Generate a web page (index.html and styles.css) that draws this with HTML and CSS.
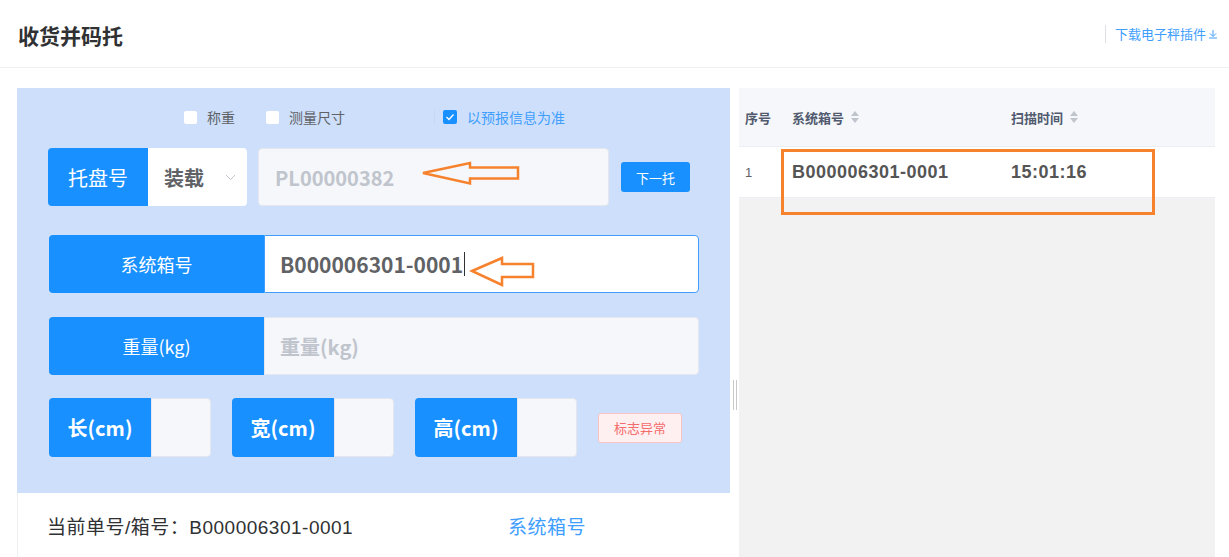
FILE: index.html
```html
<!DOCTYPE html>
<html lang="zh-CN">

<head>
    <meta charset="UTF-8">
    <meta name="viewport" content="width=device-width, initial-scale=1.0">
    <title>收货并码托</title>
    <link rel="stylesheet" href="styles.css">
</head>

<body>

    <header class="page-header">
        <h1>收货并码托</h1>
        <div class="header-tools">
            <span class="tool-sep"></span>
            <a class="download-link">下载电子秤插件
                <svg width="10" height="10" viewBox="0 0 10 10"><path d="M5 1v6M2 4.5l3 3 3-3M1 9h8" fill="none" stroke="#409eff" stroke-width="1"/></svg>
            </a>
        </div>
    </header>

    <div class="page-body">
        <div class="left-side">
            <div class="form-area">
                <div class="check-row">
                    <label class="check"><span class="box"></span>称重</label>
                    <label class="check"><span class="box"></span>测量尺寸</label>
                    <span class="check-sep"></span>
                    <label class="check checked"><span class="box">
                        <svg width="10" height="8" viewBox="0 0 10 8"><path d="M1.5 4l2.5 2.5 4.5-5" fill="none" stroke="#fff" stroke-width="1.3"/></svg>
                    </span>以预报信息为准</label>
                </div>

                <div class="form-row">
                    <div class="addon pallet">托盘号</div>
                    <div class="select-box">装载
                        <svg width="11" height="7" viewBox="0 0 11 7"><path d="M1 1l4.5 4.5L10 1" fill="none" stroke="#c0c4cc" stroke-width="1"/></svg>
                    </div>
                    <div class="input-box pallet-input placeholder">PL00000382</div>
                    <button class="btn-primary">下一托</button>
                </div>

                <div class="form-row wide">
                    <div class="addon wide-addon">系统箱号</div>
                    <div class="input-box focus box-no">B000006301-0001<span class="caret"></span></div>
                </div>

                <div class="form-row wide">
                    <div class="addon wide-addon">重量(kg)</div>
                    <div class="input-box placeholder">重量(kg)</div>
                </div>

                <div class="form-row size-row">
                    <div class="size-group">
                        <div class="addon size-addon">长(cm)</div>
                        <div class="input-box size-input"></div>
                    </div>
                    <div class="size-group">
                        <div class="addon size-addon">宽(cm)</div>
                        <div class="input-box size-input"></div>
                    </div>
                    <div class="size-group">
                        <div class="addon size-addon">高(cm)</div>
                        <div class="input-box size-input"></div>
                    </div>
                    <button class="btn-danger">标志异常</button>
                </div>

                <!-- annotation arrows -->
                <svg class="mark-arrow arrow-one" width="104" height="28" viewBox="0 0 104 28">
                    <path d="M3 13 L50 3 L50 7.5 L98 7.5 L98 18.5 L50 18.5 L50 23.5 Z" fill="none" stroke="#f7822d" stroke-width="2.5" stroke-linejoin="miter"/>
                </svg>
                <svg class="mark-arrow arrow-two" width="70" height="34" viewBox="0 0 70 34">
                    <path d="M3 15 L33 2 L33 8 L64 8 L64 21 L33 21 L33 29 Z" fill="none" stroke="#f7822d" stroke-width="2.5"/>
                </svg>
            </div>

            <div class="current-info">
                <span class="current-no">当前单号/箱号：B000006301-0001</span>
                <span class="current-type">系统箱号</span>
            </div>
        </div>

        <div class="splitter"><span></span><span></span></div>

        <div class="right-side">
            <div class="table-head">
                <div class="col col-no">序号</div>
                <div class="col col-box">系统箱号
                    <svg class="sort" width="10" height="14" viewBox="0 0 10 14"><path d="M5 1l4 5H1z M5 13l4-5H1z" fill="#c0c4cc"/></svg>
                </div>
                <div class="col col-time">扫描时间
                    <svg class="sort" width="10" height="14" viewBox="0 0 10 14"><path d="M5 1l4 5H1z M5 13l4-5H1z" fill="#c0c4cc"/></svg>
                </div>
            </div>
            <div class="table-row">
                <div class="col col-no">1</div>
                <div class="col col-box strong">B000006301-0001</div>
                <div class="col col-time strong">15:01:16</div>
            </div>
            <div class="table-empty"></div>
            <div class="mark-box"></div>
        </div>
    </div>

</body>

</html>
```

FILE: styles.css
```css
/* Global */
body {
    margin: 0;
    padding: 0;
    font-family: "Liberation Sans", "Noto Sans CJK SC", sans-serif;
    color: #303133;
    background: #fff;
    overflow: hidden;
}

/* Header */
.page-header {
    height: 67px;
    border-bottom: 1px solid #eef0f3;
    display: flex;
    align-items: center;
    justify-content: space-between;
    padding: 0 11px 0 18px;
}

.page-header h1 {
    margin: 0;
    font-size: 21px;
    font-weight: bold;
    font-family: "Noto Sans CJK SC", sans-serif;
    color: #303133;
    padding-top: 2px;
}

.header-tools {
    display: flex;
    align-items: center;
}

.tool-sep {
    width: 1px;
    height: 18px;
    background: #dcdfe6;
    margin-right: 9px;
}

.download-link {
    font-size: 13px;
    color: #409eff;
    font-family: "Noto Sans CJK SC", sans-serif;
    display: flex;
    align-items: center;
    gap: 2px;
}

/* Body layout */
.page-body {
    display: flex;
    padding: 20px 0 0 17px;
}

.left-side {
    width: 713px;
    flex-shrink: 0;
}

.form-area {
    position: relative;
    background: #cddffb;
    height: 405px;
    box-sizing: border-box;
    padding: 20px 0 0 31px;
}

/* Checkboxes */
.check-row {
    display: flex;
    align-items: center;
    height: 18px;
    padding-left: 136px;
}

.check {
    display: flex;
    align-items: center;
    font-size: 14px;
    color: #606266;
    font-family: "Noto Sans CJK SC", sans-serif;
    margin-right: 31px;
}

.check .box {
    width: 13px;
    height: 13px;
    background: #fff;
    border-radius: 2px;
    margin-right: 10px;
    display: flex;
    align-items: center;
    justify-content: center;
}

.check.checked {
    color: #409eff;
    margin-right: 0;
}

.check.checked .box {
    background: #1890ff;
    width: 14px;
    height: 14px;
}

.check-sep {
    width: 1px;
    height: 14px;
    background: #c9d8ee;
    margin: 0 8px 0 58px;
}

/* Form rows */
.form-row {
    display: flex;
    align-items: center;
    margin-top: 22px;
    height: 58px;
}

.form-row.wide {
    margin-left: 1px;
    width: 650px;
    margin-top: 29px;
}

.form-row.wide + .form-row.wide {
    margin-top: 24px;
}

.addon {
    height: 100%;
    background: #1890ff;
    color: #fff;
    display: flex;
    align-items: center;
    justify-content: center;
    border-radius: 4px 0 0 4px;
    font-family: "Noto Sans CJK SC", sans-serif;
    flex-shrink: 0;
}

.addon.pallet {
    width: 100px;
    font-size: 20px;
}

.wide-addon {
    width: 215px;
    font-size: 18px;
}

.select-box {
    width: 99px;
    height: 100%;
    box-sizing: border-box;
    background: #fff;
    border-radius: 0 4px 4px 0;
    display: flex;
    align-items: center;
    justify-content: space-between;
    padding: 0 11px 0 16px;
    font-size: 20px;
    font-weight: bold;
    color: #606266;
    font-family: "Noto Sans CJK SC", sans-serif;
}

.input-box {
    height: 100%;
    box-sizing: border-box;
    background: #f5f7fa;
    border: 1px solid #e4e7ed;
    border-radius: 0 4px 4px 0;
    display: flex;
    align-items: center;
    padding-left: 15px;
    font-size: 20px;
    font-weight: bold;
    color: #606266;
    font-family: "Noto Sans CJK SC", sans-serif;
    flex: 1;
}

.input-box.placeholder {
    color: #c0c4cc;
}

.pallet-input {
    flex: none;
    width: 351px;
    margin-left: 11px;
    border-radius: 4px;
    padding-left: 16px;
}

.input-box.focus {
    background: #fff;
    border-color: #409eff;
}

.box-no {
    font-size: 21px;
}

.caret {
    width: 1px;
    height: 24px;
    background: #303133;
    margin-left: 1px;
}

.btn-primary {
    margin-left: 12px;
    width: 69px;
    height: 30px;
    border: none;
    border-radius: 3px;
    background: #1890ff;
    color: #fff;
    font-size: 13px;
    font-family: "Noto Sans CJK SC", sans-serif;
    padding: 0;
}

/* Size row */
.size-row {
    margin-top: 23px;
    margin-left: 1px;
    height: 59px;
}

.size-group {
    display: flex;
    height: 100%;
    width: 162px;
    margin-right: 21px;
}

.size-addon {
    width: 102px;
    font-size: 20px;
    font-weight: bold;
}

.size-input {
    flex: 1;
    padding: 0;
}

.btn-danger {
    width: 84px;
    height: 30px;
    padding: 0;
    background: #fef0f0;
    border: 1px solid #fbc4c4;
    border-radius: 3px;
    color: #f56c6c;
    font-size: 13px;
    font-family: "Noto Sans CJK SC", sans-serif;
}

/* Annotation arrows */
.mark-arrow {
    position: absolute;
}

.arrow-one {
    left: 403px;
    top: 72px;
}

.arrow-two {
    left: 452px;
    top: 168px;
}

/* Current info */
.current-info {
    height: 64px;
    border-left: 1px solid #eef0f3;
    display: flex;
    align-items: center;
    padding-left: 29px;
    font-size: 19px;
    letter-spacing: 0.5px;
}

.current-no {
    width: 461px;
    color: #303133;
}

.current-type {
    color: #409eff;
    font-family: "Noto Sans CJK SC", sans-serif;
}

/* Splitter */
.splitter {
    width: 9px;
    flex-shrink: 0;
    display: flex;
    justify-content: center;
    gap: 2px;
    padding-top: 292px;
    box-sizing: border-box;
    height: 322px;
}

.splitter span {
    width: 1px;
    height: 30px;
    background: #c8c8c8;
}

/* Right table */
.right-side {
    position: relative;
    width: 476px;
    flex-shrink: 0;
    display: flex;
    flex-direction: column;
    height: 469px;
}

.table-head,
.table-row {
    display: flex;
    align-items: center;
    border-bottom: 1px solid #ebeef5;
}

.table-head {
    height: 58px;
    background: #f5f7fa;
    font-size: 13px;
    font-weight: bold;
    color: #515a6e;
    font-family: "Noto Sans CJK SC", sans-serif;
}

.table-row {
    height: 50px;
    background: #fff;
    font-size: 13px;
    color: #606266;
}

.col {
    display: flex;
    align-items: center;
}

.col-no {
    width: 53px;
    padding-left: 6px;
    box-sizing: border-box;
}

.col-box {
    width: 219px;
}

.sort {
    margin-left: 6px;
}

.strong {
    font-size: 18px;
    font-weight: bold;
    letter-spacing: 0.5px;
    color: #555;
}

.table-empty {
    flex: 1;
    background: #f2f2f2;
}

.mark-box {
    position: absolute;
    left: 42px;
    top: 61px;
    width: 374px;
    height: 66px;
    box-sizing: border-box;
    border: 3px solid #f7822d;
}
```
